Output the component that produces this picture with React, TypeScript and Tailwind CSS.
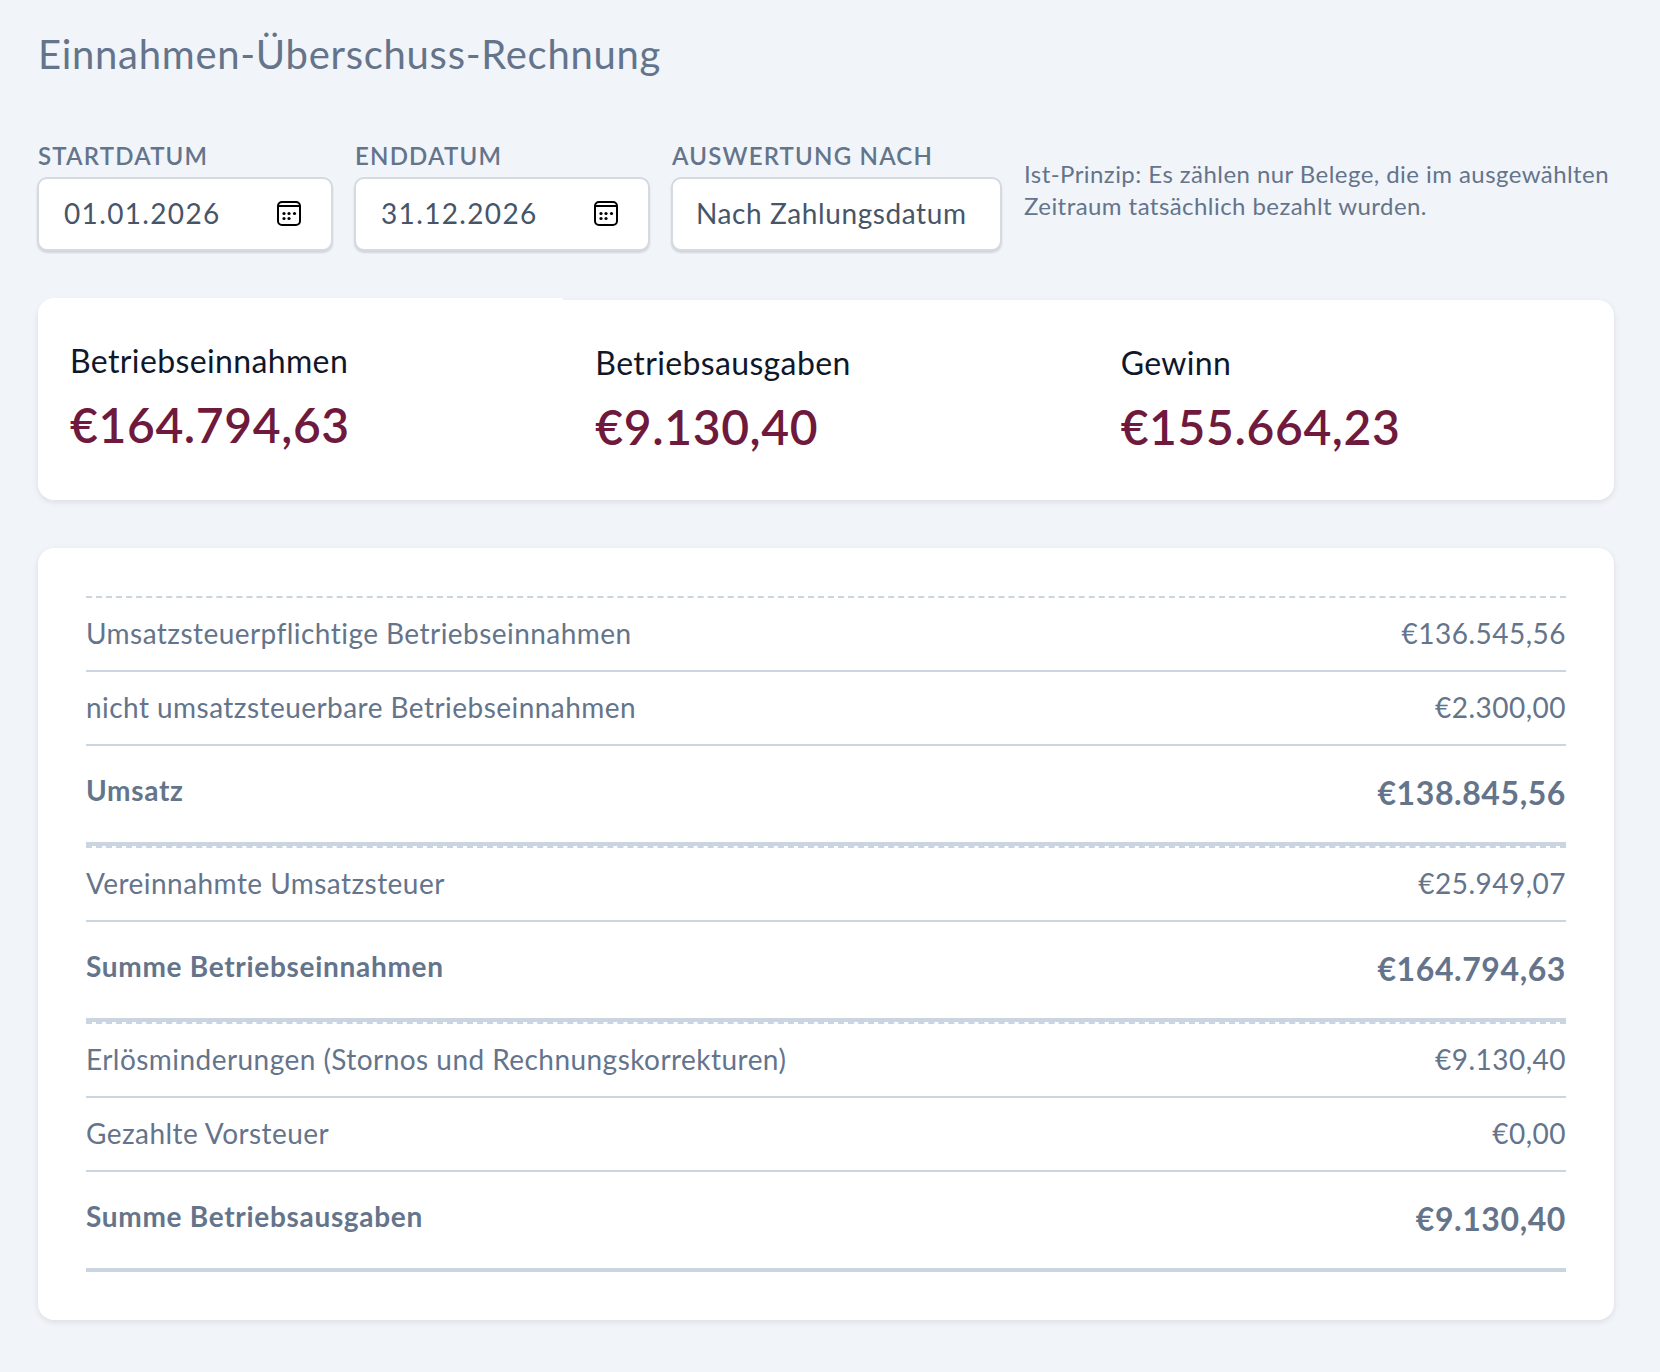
const rows = [
  { label: "Umsatzsteuerpflichtige Betriebseinnahmen", value: "€136.545,56" },
  { label: "nicht umsatzsteuerbare Betriebseinnahmen", value: "€2.300,00" },
  { label: "Umsatz", value: "€138.845,56", total: true },
  { label: "Vereinnahmte Umsatzsteuer", value: "€25.949,07", afterTotal: true },
  { label: "Summe Betriebseinnahmen", value: "€164.794,63", total: true },
  { label: "Erlösminderungen (Stornos und Rechnungskorrekturen)", value: "€9.130,40", afterTotal: true },
  { label: "Gezahlte Vorsteuer", value: "€0,00" },
  { label: "Summe Betriebsausgaben", value: "€9.130,40", total: true },
];

function CalendarIcon() {
  return (
    <svg width="24" height="25" viewBox="0 0 24 25" fill="none" className="shrink-0">
      <rect x="1" y="1" width="22" height="23" rx="4" stroke="#000" strokeWidth="2" />
      <path d="M1 5h22" stroke="#000" strokeWidth="2" />
      <g fill="#000">
        <circle cx="7" cy="12.5" r="1.6" />
        <circle cx="12" cy="12.5" r="1.6" />
        <circle cx="17.5" cy="12.5" r="1.6" />
        <circle cx="7" cy="17.5" r="1.6" />
        <circle cx="12" cy="17.5" r="1.6" />
      </g>
    </svg>
  );
}

function DateField({ label, value }: { label: string; value: string }) {
  return (
    <div className="w-[294px]">
      <p className="h-[32px] text-[24px] leading-[32px] font-semibold uppercase text-[#64748b] tracking-[1.2px]">{label}</p>
      <div className="mt-[5px] -ml-px flex h-[74px] w-[296px] items-center justify-between rounded-[10px] border-2 border-[#d5dae1] bg-white pb-[2px] pl-[25px] pr-[30px] shadow-[0_2px_2px_rgba(15,23,42,0.14)]">
        <span className="text-[28px] tracking-[1.35px] text-[#475569]">{value}</span>
        <CalendarIcon />
      </div>
    </div>
  );
}

function Stat({ label, value, raised }: { label: string; value: string; raised?: boolean }) {
  return (
    <div className={raised ? "flex-1 -translate-y-[2px] rounded-l-[16px] bg-white pl-[32px] pt-[39px]" : "flex-1 pl-[32px] pt-[39px]"}>
      <p className="text-[32px] leading-[48px] tracking-[0.37px] text-[#0f172a]">{label}</p>
      <p className="mt-[8px] text-[48px] leading-[64px] tracking-[0.62px] font-semibold text-[#6f1a3c]">{value}</p>
    </div>
  );
}

export default function App() {
  return (
    <div className="min-h-[1372px] bg-[#f1f5f9] pl-[38px] pr-[46px] pt-[26px] font-[Lato,sans-serif]">
      <h1 className="text-[40px] leading-[56px] tracking-[0.72px] text-[#64748b]">Einnahmen-Überschuss-Rechnung</h1>

      <div className="mt-[58px] flex items-start gap-[23px]">
        <DateField label="Startdatum" value="01.01.2026" />
        <DateField label="Enddatum" value="31.12.2026" />
        <div className="w-[329px]">
          <p className="h-[32px] text-[24px] leading-[32px] font-semibold uppercase text-[#64748b] tracking-[1.2px]">Auswertung nach</p>
          <div className="mt-[5px] -ml-px flex h-[74px] w-[331px] items-center rounded-[10px] border-2 border-[#d5dae1] bg-white pb-[2px] pl-[23px] shadow-[0_2px_2px_rgba(15,23,42,0.14)]">
            <span className="text-[28px] tracking-[0.59px] text-[#475569]">Nach Zahlungsdatum</span>
          </div>
        </div>
        <p className="whitespace-nowrap pt-[18px] text-[24px] leading-[32px] tracking-[0.44px] text-[#64748b]">
          Ist-Prinzip: Es zählen nur Belege, die im ausgewählten
          <br />
          Zeitraum tatsächlich bezahlt wurden.
        </p>
      </div>

      <div className="mt-[49px] flex h-[200px] rounded-[16px] bg-white shadow-[0_2px_6px_rgba(15,23,42,0.1)]">
        <Stat raised label="Betriebseinnahmen" value="€164.794,63" />
        <Stat label="Betriebsausgaben" value="€9.130,40" />
        <Stat label="Gewinn" value="€155.664,23" />
      </div>

      <div className="mt-[48px] rounded-[16px] bg-white p-[48px] shadow-[0_2px_6px_rgba(15,23,42,0.1)]">
        <div className="border-t-2 border-dashed border-[#cbd5e1]">
          {rows.map((row) => {
            let cls = "flex items-center justify-between border-[#cbd5e1] pb-[2px] text-[#64748b] ";
            if (row.total) cls += "h-[100px] border-b-4";
            else if (row.afterTotal) cls += "h-[76px] border-t-2 border-b-2 [border-top-style:dashed]";
            else cls += "h-[74px] border-b-2";
            return (
              <div key={row.label} className={cls}>
                <span className={row.total ? "pb-[7px] text-[28px] tracking-[0.7px] font-bold" : "text-[28px] tracking-[0.45px]"}>{row.label}</span>
                <span className={row.total ? "text-[32px] tracking-[0.58px] font-bold" : "text-[28px] tracking-[0.48px]"}>{row.value}</span>
              </div>
            );
          })}
        </div>
      </div>
    </div>
  );
}
